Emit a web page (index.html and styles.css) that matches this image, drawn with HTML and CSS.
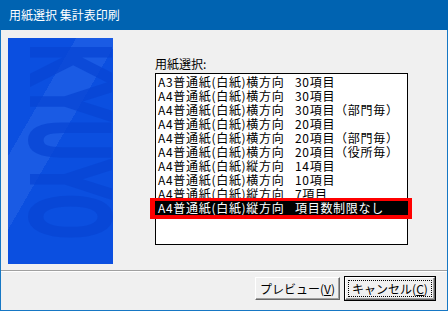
FILE: index.html
```html
<!DOCTYPE html>
<html lang="ja">
<head>
  <meta charset="UTF-8" />
  <title>用紙選択 集計表印刷</title>
  <link rel="stylesheet" href="styles.css">
</head>
<body>

<div class="window">
  <div class="titlebar">用紙選択 集計表印刷</div>

  <div class="content">
    <div class="banner">
      <span class="watermark">KYUYO</span>
    </div>

    <div class="select-area">
      <div class="label">用紙選択:</div>
      <div class="listbox">
        <div class="item"><span>A3普通紙(白紙)横方向</span><span>30項目</span></div>
        <div class="item"><span>A4普通紙(白紙)横方向</span><span>30項目</span></div>
        <div class="item"><span>A4普通紙(白紙)横方向</span><span>30項目（部門毎）</span></div>
        <div class="item"><span>A4普通紙(白紙)横方向</span><span>20項目</span></div>
        <div class="item"><span>A4普通紙(白紙)横方向</span><span>20項目（部門毎）</span></div>
        <div class="item"><span>A4普通紙(白紙)横方向</span><span>20項目（役所毎）</span></div>
        <div class="item"><span>A4普通紙(白紙)縦方向</span><span>14項目</span></div>
        <div class="item"><span>A4普通紙(白紙)横方向</span><span>10項目</span></div>
        <div class="item"><span>A4普通紙(白紙)縦方向</span><span>7項目</span></div>
        <div class="item selected"><span>A4普通紙(白紙)縦方向</span><span>項目数制限なし</span></div>
      </div>
    </div>
  </div>

  <div class="footer">
    <button class="btn">プレビュー(<u>V</u>)</button>
    <button class="btn default"><span class="focus">キャンセル(<u>C</u>)</span></button>
  </div>
</div>

</body>
</html>
```

FILE: styles.css
```css
body {
  margin: 0;
  font-family: "Noto Sans CJK JP", "Liberation Sans", sans-serif;
  font-size: 12px;
  color: #000;
}
.window {
  width: 448px;
  height: 311px;
  box-sizing: border-box;
  background: #f0f0f0;
  border: 1px solid #1677c4;
  border-top: none;
  display: flex;
  flex-direction: column;
}
.titlebar {
  height: 30px;
  margin: 0 -1px;
  background: #0063b1;
  color: #fff;
  line-height: 30px;
  padding-left: 9px;
  font-size: 12px;
}
.content {
  display: flex;
  padding: 8px 0 0 7px;
  height: 232px;
  border-bottom: 1px solid #a0a0a0;
  box-shadow: 0 1px 0 #fff;
}
.banner {
  position: relative;
  overflow: hidden;
  width: 105px;
  height: 226px;
  background: linear-gradient(120deg, #0b4fe0 0 29%, #1a5be4 29% 47%, #0b4fe0 47%);
}
.watermark {
  position: absolute;
  left: 4px;
  top: 4px;
  writing-mode: vertical-rl;
  transform: scaleX(1.8);
  transform-origin: left top;
  font-family: "DejaVu Sans Condensed", sans-serif;
  font-weight: bold;
  font-size: 62px;
  letter-spacing: -4px;
  line-height: 1;
  color: #0845d4;
  opacity: 0.75;
}
.select-area {
  margin-left: 42px;
  padding-top: 19px;
}
.label {
  line-height: 14px;
  height: 16px;
}
.listbox {
  width: 253px;
  height: 172px;
  box-sizing: border-box;
  background: #fff;
  border: 1px solid #000;
  padding: 1px 0;
}
.item {
  position: relative;
  display: grid;
  grid-template-columns: 137px auto;
  height: 14px;
  line-height: 14px;
  padding-left: 2px;
  white-space: nowrap;
  letter-spacing: 0.7px;
}
.item.selected {
  background: #000;
  color: #fff;
}
.item.selected::after {
  content: "";
  position: absolute;
  left: -6px;
  right: -5px;
  top: -3px;
  bottom: -4px;
  border: 4px solid #f00;
  border-top-width: 3px;
  border-left-width: 5px;
}
.footer {
  flex: 1;
  display: flex;
  justify-content: flex-end;
  align-items: flex-start;
  gap: 5px;
  padding: 6px 12px 0 0;
}
.btn {
  width: 85px;
  height: 23px;
  font-family: inherit;
  font-size: 12px;
  background: #f0f0f0;
  border: 1px solid;
  border-color: #fff #696969 #696969 #fff;
  box-shadow: inset -1px -1px #a0a0a0;
  padding: 0;
  color: #000;
  white-space: nowrap;
}
.btn.default {
  width: 90px;
  display: flex;
  padding: 2px;
  outline: 1px solid #000;
}
.focus {
  flex: 1;
  border: 1px dotted #000;
  line-height: 15px;
  text-align: center;
}
```
